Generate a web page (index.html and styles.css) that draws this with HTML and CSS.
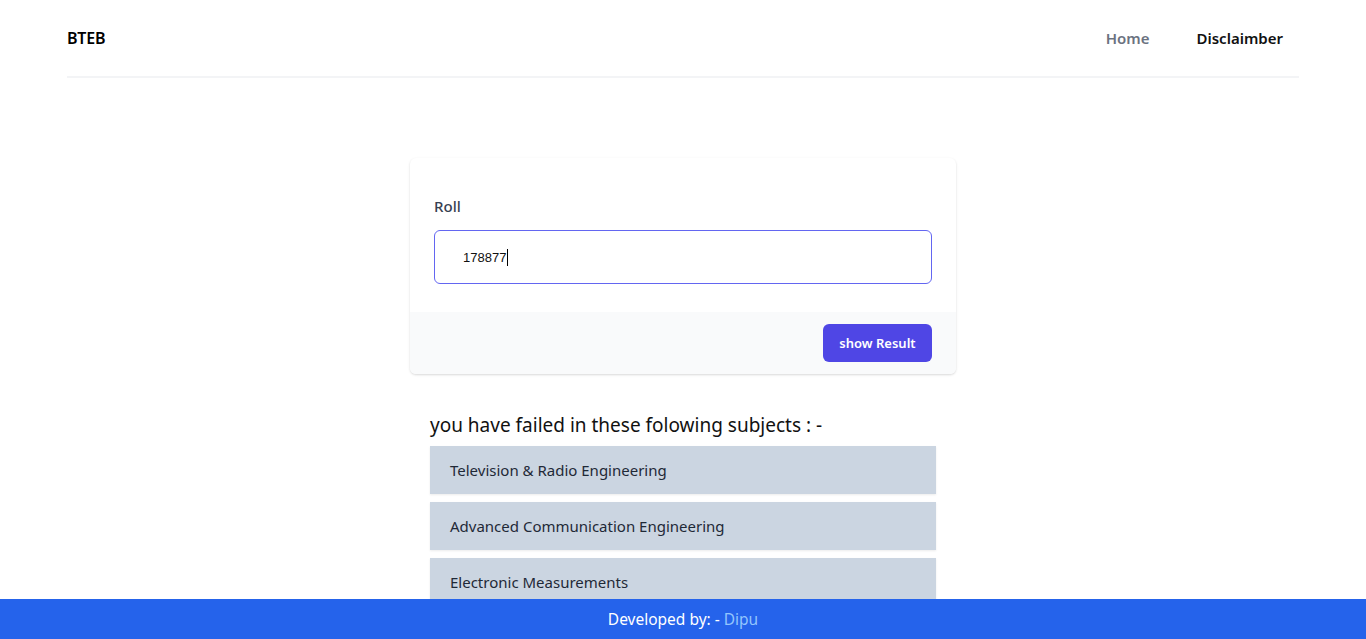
FILE: index.html
```html
<!DOCTYPE html>
<html lang="en">
<head>
<meta charset="utf-8">
<title>BTEB</title>
<link rel="stylesheet" href="styles.css">
</head>
<body>
<header class="nav">
  <div class="brand">BTEB</div>
  <nav class="links">
    <a class="link muted" href="#">Home</a>
    <a class="link" href="#">Disclaimber</a>
  </nav>
</header>
<main class="main">
  <form class="card">
    <div class="card-body">
      <label class="label" for="roll">Roll</label>
      <div class="input"><span class="value">178877</span><span class="caret"></span></div>
    </div>
    <div class="card-foot">
      <button class="btn" type="button">show Result</button>
    </div>
  </form>
  <section class="result">
    <h2 class="result-title">you have failed in these folowing subjects : -</h2>
    <ul class="subjects">
      <li class="subject">Television &amp; Radio Engineering</li>
      <li class="subject">Advanced Communication Engineering</li>
      <li class="subject">Electronic Measurements</li>
    </ul>
  </section>
</main>
<footer class="footer">Developed by: - <span class="dev">Dipu</span></footer>
</body>
</html>
```
FILE: styles.css
```css
* { box-sizing: border-box; }
html, body { margin: 0; padding: 0; }
body {
  font-family: "Noto Sans", "Open Sans", sans-serif;
  color: #111827;
  background: #fff;
  height: 639px;
  overflow: hidden;
}
.nav {
  margin: 0 67px;
  height: 78px;
  border-bottom: 2px solid #f3f4f6;
  display: flex;
  align-items: center;
  justify-content: space-between;
}
.brand { font-size: 16px; font-weight: 600; color: #000; letter-spacing: -0.2px; }
.links { display: flex; gap: 47px; padding-right: 16px; }
.link { font-size: 15px; font-weight: 600; color: #111; text-decoration: none; }
.link.muted { color: #6b7280; }
.main {
  display: flex;
  flex-direction: column;
  align-items: center;
  padding-top: 80px;
}
.card {
  width: 546px;
  background: #fff;
  border-radius: 6px;
  box-shadow: 0 1px 3px rgba(0,0,0,0.1), 0 1px 2px rgba(0,0,0,0.06);
  overflow: hidden;
}
.card-body { padding: 38px 24px 28px; }
.label { display: block; font-size: 15px; font-weight: 500; color: #374151; line-height: 20px; margin-bottom: 14px; }
.input {
  height: 54px;
  border: 1px solid #6366f1;
  border-radius: 6px;
  display: flex;
  align-items: center;
  padding-left: 28px;
  font-family: "Liberation Sans", Arial, sans-serif;
  font-size: 13px;
  color: #111;
}
.caret { width: 1px; height: 17px; background: #000; margin-left: 1px; }
.card-foot {
  background: #f9fafb;
  padding: 12px 24px;
  display: flex;
  justify-content: flex-end;
}
.btn {
  height: 38px;
  width: 109px;
  border: 0;
  border-radius: 6px;
  background: #4f46e5;
  color: #fff;
  font-family: "Noto Sans", sans-serif;
  font-size: 13px;
  font-weight: 600;
}
.result { width: 506px; margin-top: 36px; }
.result-title { margin: 0 0 6px; font-size: 19px; font-weight: 400; line-height: 30px; color: #111; }
.subjects { list-style: none; margin: 0; padding: 0; display: flex; flex-direction: column; gap: 8px; }
.subject {
  height: 48px;
  background: #cbd5e1;
  padding-left: 20px;
  display: flex;
  align-items: center;
  font-size: 15px;
  color: #1f2937;
  box-shadow: 0 1px 2px rgba(0,0,0,0.08);
}
.footer {
  position: fixed;
  left: 0; right: 0; bottom: 0;
  height: 40px;
  background: #2563eb;
  color: #fff;
  display: flex;
  align-items: center;
  justify-content: center;
  font-size: 15.5px;
}
.dev { color: #93c5fd; margin-left: 4px; }
```
